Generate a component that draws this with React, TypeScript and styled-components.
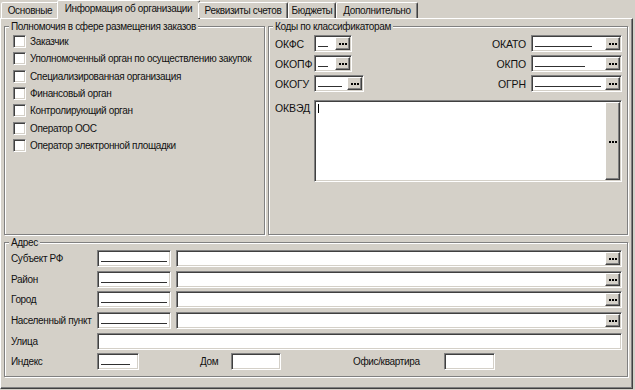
import React from 'react'
import styled, { createGlobalStyle } from 'styled-components'

const GlobalStyle = createGlobalStyle`
  html, body {
    margin: 0;
    padding: 0;
    background: #d4d0c8;
  }
  body {
    font-family: "Liberation Sans", Arial, sans-serif;
    font-size: 10px;
    letter-spacing: -0.35px;
    color: #111;
  }
`

const Window = styled.div`
  width: 635px;
  height: 390px;
  background: #d4d0c8;
  display: flex;
  flex-direction: column;
  overflow: hidden;
`

const TabStrip = styled.div`
  display: flex;
  align-items: flex-end;
  height: 18px;
  padding-left: 1px;
  position: relative;
  z-index: 1;
`

const Tab = styled.div<{ $w: number; $active?: boolean }>`
  box-sizing: border-box;
  width: ${p => p.$w}px;
  height: ${p => (p.$active ? 19 : 16)}px;
  margin: ${p => (p.$active ? '0 -2px -1px' : '0')};
  border: 1px solid;
  border-bottom: none;
  border-color: #fff #404040 transparent #fff;
  box-shadow: inset -1px 0 #808080;
  border-radius: 2px 2px 0 0;
  background: #d4d0c8;
  display: flex;
  align-items: center;
  justify-content: center;
  padding-bottom: ${p => (p.$active ? 3 : 0)}px;
  white-space: nowrap;
`

const Page = styled.div`
  box-sizing: border-box;
  width: 633px;
  height: 371px;
  border: 1px solid;
  border-color: #fff #404040 #404040 #fff;
  box-shadow: inset -1px -1px #808080;
  padding: 7px 4px 0 3px;
  display: flex;
  flex-direction: column;
  gap: 7px;
`

const TopRow = styled.div`
  display: grid;
  grid-template-columns: 261px 1fr;
  column-gap: 3px;
`

const Group = styled.div<{ $h: number }>`
  box-sizing: border-box;
  height: ${p => p.$h}px;
  border: 1px solid #808080;
  box-shadow: inset 1px 1px #fff, 1px 1px #fff;
  display: flex;
  flex-direction: column;
`

const Legend = styled.span`
  align-self: flex-start;
  margin: -7px 0 0 4px;
  padding: 0 2px;
  height: 13px;
  line-height: 13px;
  background: #d4d0c8;
  white-space: nowrap;
`

const CheckList = styled.div`
  display: flex;
  flex-direction: column;
  padding-left: 8px;
`

const CheckRow = styled.label`
  display: flex;
  align-items: center;
  height: 17.3px;
  white-space: nowrap;
`

const CheckBox = styled.span`
  box-sizing: border-box;
  flex: none;
  width: 13px;
  height: 13px;
  margin-right: 4px;
  background: #fff;
  border: 1px solid;
  border-color: #808080 #fff #fff #808080;
  box-shadow: inset 1px 1px #404040, inset -1px -1px #d4d0c8;
`

const CodesGrid = styled.div`
  display: grid;
  grid-template-columns: 39px auto 1fr 91px;
  grid-auto-rows: 17px;
  row-gap: 3px;
  padding: 2px 5px 0 6px;
`

const CodeLabel = styled.span<{ $right?: boolean }>`
  display: flex;
  align-items: center;
  justify-content: ${p => (p.$right ? 'flex-end' : 'flex-start')};
  padding-right: ${p => (p.$right ? 5 : 0)}px;
  font-size: 10.5px;
  letter-spacing: -0.1px;
  white-space: nowrap;
`

const TallLabel = styled(CodeLabel)`
  align-items: flex-start;
  padding-top: 2px;
  margin-top: 5px;
`

const Field = styled.div<{ $w?: number; $h?: number }>`
  box-sizing: border-box;
  width: ${p => (p.$w ? `${p.$w}px` : 'auto')};
  height: ${p => p.$h ?? 17}px;
  display: flex;
  align-items: stretch;
  background: #fff;
  border: 1px solid;
  border-color: #808080 #fff #fff #808080;
  box-shadow: inset 1px 1px #404040, inset -1px -1px #d4d0c8;
  padding: 1px;
`

const Memo = styled(Field)`
  grid-column: 2 / -1;
  margin-top: 5px;
`

const Mask = styled.span<{ $w: number }>`
  align-self: flex-end;
  width: ${p => p.$w}px;
  margin: 0 auto 3px 2px;
  border-bottom: 1px solid #303030;
`

const Caret = styled.span`
  align-self: flex-start;
  width: 1px;
  height: 9px;
  margin: 2px auto 0 2px;
  background: #000;
`

const PickButton = styled.span`
  box-sizing: border-box;
  flex: none;
  width: 15px;
  margin-left: auto;
  display: flex;
  align-items: center;
  justify-content: center;
  background: #d4d0c8;
  border: 1px solid;
  border-color: #fff #404040 #404040 #fff;
  box-shadow: inset -1px -1px #808080;
`

const Dots = styled.span`
  width: 8px;
  height: 2px;
  margin-top: 1px;
  background: repeating-linear-gradient(to right, #000 0 2px, transparent 2px 3px);
`

const AddressGrid = styled.div`
  display: grid;
  grid-template-columns: 81px 74px 1fr;
  grid-auto-rows: 17px;
  column-gap: 5px;
  row-gap: 3.7px;
  padding: 1px 5px 0 6px;
`

const AddrLabel = styled.span`
  display: flex;
  align-items: center;
  white-space: nowrap;
`

const Wide = styled(Field)`
  grid-column: 2 / -1;
`

const InlineRow = styled.div`
  grid-column: 2 / -1;
  display: flex;
  align-items: stretch;
`

const InlineLabel = styled.span<{ $ml: number; $w: number }>`
  display: flex;
  align-items: center;
  margin-left: ${p => p.$ml}px;
  width: ${p => p.$w}px;
  white-space: nowrap;
`

const Pick = () => (
  <PickButton>
    <Dots />
  </PickButton>
)

const tabs = [
  { label: 'Основные', w: 58 },
  { label: 'Информация об организации', w: 143, active: true },
  { label: 'Реквизиты счетов', w: 90 },
  { label: 'Бюджеты', w: 48 },
  { label: 'Дополнительно', w: 82 },
]

const powers = [
  'Заказчик',
  'Уполномоченный орган по осуществлению закупок',
  'Специализированная организация',
  'Финансовый орган',
  'Контролирующий орган',
  'Оператор ООС',
  'Оператор электронной площадки',
]

const codeRows = [
  { left: 'ОКФС', lw: 38, lm: 10, right: 'ОКАТО', rm: 57 },
  { left: 'ОКОПФ', lw: 38, lm: 10, right: 'ОКПО', rm: 50 },
  { left: 'ОКОГУ', lw: 50, lm: 24, right: 'ОГРН', rm: 66 },
]

const addressRows = ['Субъект РФ', 'Район', 'Город', 'Населенный пункт']

export default function App() {
  return (
    <>
      <GlobalStyle />
      <Window>
        <TabStrip>
          {tabs.map(t => (
            <Tab key={t.label} $w={t.w} $active={t.active}>
              {t.label}
            </Tab>
          ))}
        </TabStrip>
        <Page>
          <TopRow>
            <Group $h={209}>
              <Legend>Полномочия в сфере размещения заказов</Legend>
              <CheckList>
                {powers.map(p => (
                  <CheckRow key={p}>
                    <CheckBox />
                    {p}
                  </CheckRow>
                ))}
              </CheckList>
            </Group>
            <Group $h={209}>
              <Legend>Коды по классификаторам</Legend>
              <CodesGrid>
                {codeRows.map(r => (
                  <React.Fragment key={r.left}>
                    <CodeLabel>{r.left}</CodeLabel>
                    <Field $w={r.lw}>
                      <Mask $w={r.lm} />
                      <Pick />
                    </Field>
                    <CodeLabel $right>{r.right}</CodeLabel>
                    <Field>
                      <Mask $w={r.rm} />
                      <Pick />
                    </Field>
                  </React.Fragment>
                ))}
                <TallLabel>ОКВЭД</TallLabel>
                <Memo $h={82}>
                  <Caret />
                  <Pick />
                </Memo>
              </CodesGrid>
            </Group>
          </TopRow>
          <Group $h={135}>
            <Legend>Адрес</Legend>
            <AddressGrid>
              {addressRows.map(r => (
                <React.Fragment key={r}>
                  <AddrLabel>{r}</AddrLabel>
                  <Field>
                    <Mask $w={66} />
                  </Field>
                  <Field>
                    <Pick />
                  </Field>
                </React.Fragment>
              ))}
              <AddrLabel>Улица</AddrLabel>
              <Wide />
              <AddrLabel>Индекс</AddrLabel>
              <InlineRow>
                <Field $w={42}>
                  <Mask $w={29} />
                </Field>
                <InlineLabel $ml={61} $w={31}>Дом</InlineLabel>
                <Field $w={50} />
                <InlineLabel $ml={72} $w={91}>Офис/квартира</InlineLabel>
                <Field $w={51} />
              </InlineRow>
            </AddressGrid>
          </Group>
        </Page>
      </Window>
    </>
  )
}
